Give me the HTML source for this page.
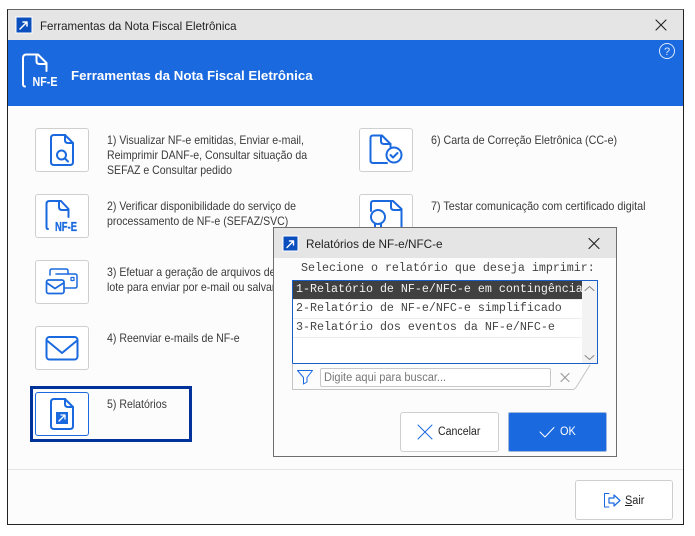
<!DOCTYPE html>
<html><head><meta charset="utf-8">
<style>
html,body{margin:0;padding:0;width:695px;height:536px;overflow:hidden;background:#fff}
*{box-sizing:border-box}
body{font-family:"Liberation Sans",sans-serif;font-size:11.5px;color:#333;position:relative}
.a{position:absolute}
.t{position:absolute;white-space:nowrap;line-height:15px;font-size:11.8px;color:#3a3a3a;transform-origin:0 0;transform:scaleX(.895)}
.b{position:absolute;width:54px;height:44px;border:1px solid #cfcfcf;border-radius:3px;background:#fff}
.m{position:absolute;white-space:pre;font-family:"Liberation Mono",monospace;font-size:11.67px;line-height:19px;color:#444}
svg{position:absolute;left:0;top:0}
</style></head><body>
<div class="a" style="left:7px;top:9px;width:677px;height:516px;border:1px solid #222;border-top-color:#666;background:#fcfcfc"></div>
<div class="a" style="left:8px;top:10px;width:675px;height:30px;background:#e5e5e5"></div>
<div class="a" style="left:8px;top:40px;width:675px;height:66px;background:#1a69df"></div>
<div class="a" style="left:8px;top:469px;width:675px;height:1px;background:#e4e4e4"></div>
<div class="t" style="left:40px;top:19px;font-size:12px;color:#222;transform:scaleX(.96)">Ferramentas da Nota Fiscal Eletrônica</div>
<div class="t" style="left:71px;top:68px;font-size:13.3px;font-weight:bold;color:#fff;transform:none">Ferramentas da Nota Fiscal Eletrônica</div>

<div class="a" style="left:30px;top:386px;width:162px;height:56px;border:3px solid #003399"></div>
<div class="b" style="left:35px;top:128px"></div>
<div class="b" style="left:35px;top:194px"></div>
<div class="b" style="left:35px;top:260px"></div>
<div class="b" style="left:35px;top:326px"></div>
<div class="b" style="left:35px;top:392px;border-color:#1a69df"></div>
<div class="b" style="left:359px;top:128px"></div>
<div class="b" style="left:359px;top:194px"></div>

<div class="t" style="left:107px;top:133px">1) Visualizar NF-e emitidas, Enviar e-mail,</div>
<div class="t" style="left:107px;top:148px">Reimprimir DANF-e, Consultar situação da</div>
<div class="t" style="left:107px;top:163px">SEFAZ e Consultar pedido</div>
<div class="t" style="left:107px;top:199px">2) Verificar disponibilidade do serviço de</div>
<div class="t" style="left:107px;top:214px">processamento de NF-e (SEFAZ/SVC)</div>
<div class="t" style="left:107px;top:265px">3) Efetuar a geração de arquivos de</div>
<div class="t" style="left:107px;top:280px">lote para enviar por e-mail ou salvar</div>
<div class="t" style="left:107px;top:331px">4) Reenviar e-mails de NF-e</div>
<div class="t" style="left:107px;top:397px">5) Relatórios</div>
<div class="t" style="left:431px;top:133px;transform:scaleX(.907)">6) Carta de Correção Eletrônica (CC-e)</div>
<div class="t" style="left:431px;top:199px;transform:scaleX(.912)">7) Testar comunicação com certificado digital</div>

<svg width="695" height="536" viewBox="0 0 695 536" fill="none" stroke-linecap="round" stroke-linejoin="round">
<!-- title icon -->
<rect x="16" y="17" width="16" height="16" fill="#0b4fbf" stroke="#fff"/>
<path d="M20 29L26.500 22.500M23 22H27V26" stroke="#fff" stroke-width="1.500"/>
<path d="M656 20L666 30M666 20L656 30" stroke="#222" stroke-width="1.100"/>
<!-- header icon -->
<g stroke="#fff" stroke-width="2">
<path d="M25 86.500Q23 86.500 23 84V58Q23 54.500 26.500 54.500H38L46.500 63V71"/>
<path d="M36.500 54.500V61Q36.500 64 39.500 64H46.500"/>
</g>
<text x="32.500" y="86" font-family="Liberation Sans" font-weight="bold" font-size="12.500" fill="#fff" textLength="25" lengthAdjust="spacingAndGlyphs">NF-E</text>
<circle cx="667" cy="51" r="7.500" stroke="#dfeaff" stroke-width="1"/>
<text x="667" y="55" text-anchor="middle" font-family="Liberation Sans" font-size="11" fill="#dfeaff">?</text>
<g stroke="#1a69df" stroke-width="2">
<!-- 1 -->
<path d="M65 135H54Q51 135 51 138V162Q51 165 54 165H70Q73 165 73 162V143Z"/>
<path d="M65 135V140Q65 143 68 143H73"/>
<circle cx="61.500" cy="155" r="4.500"/><path d="M65 158.500L68 161.500"/>
<!-- 2 -->
<path d="M48 229Q46.500 229 46.500 227V204Q46.500 201 49.500 201H61L68.500 209V217"/>
<path d="M59 201V207Q59 210 62 210H68.500"/>
<!-- 3 -->
<path d="M50 275V271Q50 269 52 269H66Q68 269 68 271V274" stroke-width="1.500"/>
<path d="M56 274H75Q77 274 77 276V286Q77 288 75 288H65" stroke-width="1.500"/>
<rect x="71" y="277.500" width="3" height="3" stroke-width="1.200"/>
<rect x="46.500" y="280" width="17.500" height="13.500" rx="2" stroke-width="1.700"/>
<path d="M47 283L55 288.500L63.500 283" stroke-width="1.700"/>
<!-- 4 -->
<rect x="46.500" y="337" width="31" height="22.500" rx="3"/>
<path d="M47.500 341L62 353L76.500 341"/>
<!-- 5 -->
<path d="M65 399H54Q51 399 51 402V426Q51 429 54 429H70Q73 429 73 426V407Z"/>
<path d="M65 399V404Q65 407 68 407H73"/>
<!-- 6 -->
<path d="M387 163H373Q370.500 163 370.500 160.500V138Q370.500 135.500 373 135.500H382L390.500 144V147"/>
<path d="M381 135.500V141Q381 144 384 144H390.500"/>
<circle cx="394" cy="155" r="7.500"/>
<path d="M390.500 155L393 157.500L397.500 153"/>
<!-- 7 -->
<path d="M371 211V203.500Q371 201 373.500 201H393L401.500 209V228"/>
<path d="M391 201V207Q391 210 394 210H401.500"/>
<circle cx="378" cy="217" r="7"/>
<path d="M375 224V228M381 224V228"/>
</g>
<rect x="56" y="412" width="12" height="12" fill="#1a69df"/>
<path d="M59 421L64.500 415.500M61 415H65V419" stroke="#fff" stroke-width="1.300"/>
<text x="55" y="231" font-family="Liberation Sans" font-weight="bold" font-size="12.500" fill="#1a69df" stroke="#1a69df" stroke-width=".3" textLength="22" lengthAdjust="spacingAndGlyphs">NF-E</text>
</svg>

<div class="a" style="left:575px;top:480px;width:98px;height:40px;border:1px solid #cfcfcf;border-radius:3px;background:#fff"></div>
<div class="t" style="left:625px;top:494px;font-size:11.500px;color:#222;transform:scaleX(.95)"><u>S</u>air</div>
<svg width="695" height="536" viewBox="0 0 695 536" fill="none" stroke-linecap="round" stroke-linejoin="round">
<path d="M609 493.500H604.500V507H609" stroke="#1a69df" stroke-width="1"/>
<path d="M609 498H614V495L620 500.500L614 506V503H609Z" stroke="#1a69df" stroke-width="1.200"/>
</svg>

<!-- dialog -->
<div class="a" style="left:273px;top:227px;width:344px;height:230px;border:1px solid #6e6e6e;background:#fcfcfc"></div>
<div class="a" style="left:274px;top:228px;width:342px;height:30px;background:#e5e5e5"></div>
<div class="t" style="left:306px;top:237px;font-size:12px;color:#222;transform:scaleX(.98)">Relatórios de NF-e/NFC-e</div>
<div class="m" style="left:301px;top:259px">Selecione o relatório que deseja imprimir:</div>
<div class="a" style="left:292px;top:280px;width:306px;height:84px;border:1px solid #1a5fc8;background:#fff"></div>
<div class="a" style="left:582px;top:281px;width:15px;height:82px;background:#f3f3f3"></div>
<div class="a" style="left:293px;top:281px;width:289px;height:18px;background:#404040"></div>
<div class="a" style="left:293px;top:299px;width:289px;height:1px;background:#ececec"></div>
<div class="a" style="left:293px;top:318px;width:289px;height:1px;background:#ececec"></div>
<div class="a" style="left:293px;top:337px;width:289px;height:1px;background:#ececec"></div>
<div class="m" style="left:296px;top:280px;color:#f2f2f2;width:286px;overflow:hidden">1-Relatório de NF-e/NFC-e em contingência</div>
<div class="m" style="left:296px;top:299px">2-Relatório de NF-e/NFC-e simplificado</div>
<div class="m" style="left:296px;top:318px">3-Relatório dos eventos da NF-e/NFC-e</div>
<div class="a" style="left:320px;top:368px;width:231px;height:19px;border:1px solid #c8c8c8;border-radius:2px;background:#fff"></div>
<div class="t" style="left:324px;top:371px;color:#777;font-size:11.500px;transform:scaleX(.96)">Digite aqui para buscar...</div>
<div class="a" style="left:400px;top:412px;width:99px;height:40px;border:1px solid #cfcfcf;border-radius:3px;background:#fff"></div>
<div class="a" style="left:508px;top:412px;width:99px;height:40px;border:1px solid #9fb8dc;border-radius:2px;background:#1a69df"></div>
<div class="t" style="left:438px;top:425px;font-size:11.500px;color:#222;transform:scaleX(.92)">Cancelar</div>
<div class="t" style="left:560px;top:425px;font-size:11.500px;color:#fff;transform:scaleX(.95)">OK</div>
<svg width="695" height="536" viewBox="0 0 695 536" fill="none" stroke-linecap="round" stroke-linejoin="round">
<rect x="283" y="236" width="15" height="15" fill="#0b4fbf" stroke="#fff"/>
<path d="M287 247.500L293 241.500M289.500 241H293.500V245" stroke="#fff" stroke-width="1.400"/>
<path d="M589 238.500L599 248.500M599 238.500L589 248.500" stroke="#222" stroke-width="1.100"/>
<path d="M585 290.500L589.500 286.500L594 290.500M585 355.500L589.500 359.500L594 355.500" stroke="#888" stroke-width="1"/>
<path d="M292.500 364V389.500H573.500L576 387.500L590 365" stroke="#c4c4c4" stroke-width="1"/>
<path d="M297.500 370.500H312.500L307 377.500V382L303.500 384V377.500Z" stroke="#1a69df" stroke-width="1"/>
<path d="M561 373.500L569 381.500M569 373.500L561 381.500" stroke="#999" stroke-width="1.100"/>
<path d="M418 425L432 439M432 425L418 439" stroke="#1a69df" stroke-width="1"/>
<path d="M540 432L545 437L554 427.500" stroke="#fff" stroke-width="1"/>
</svg>
</body></html>
